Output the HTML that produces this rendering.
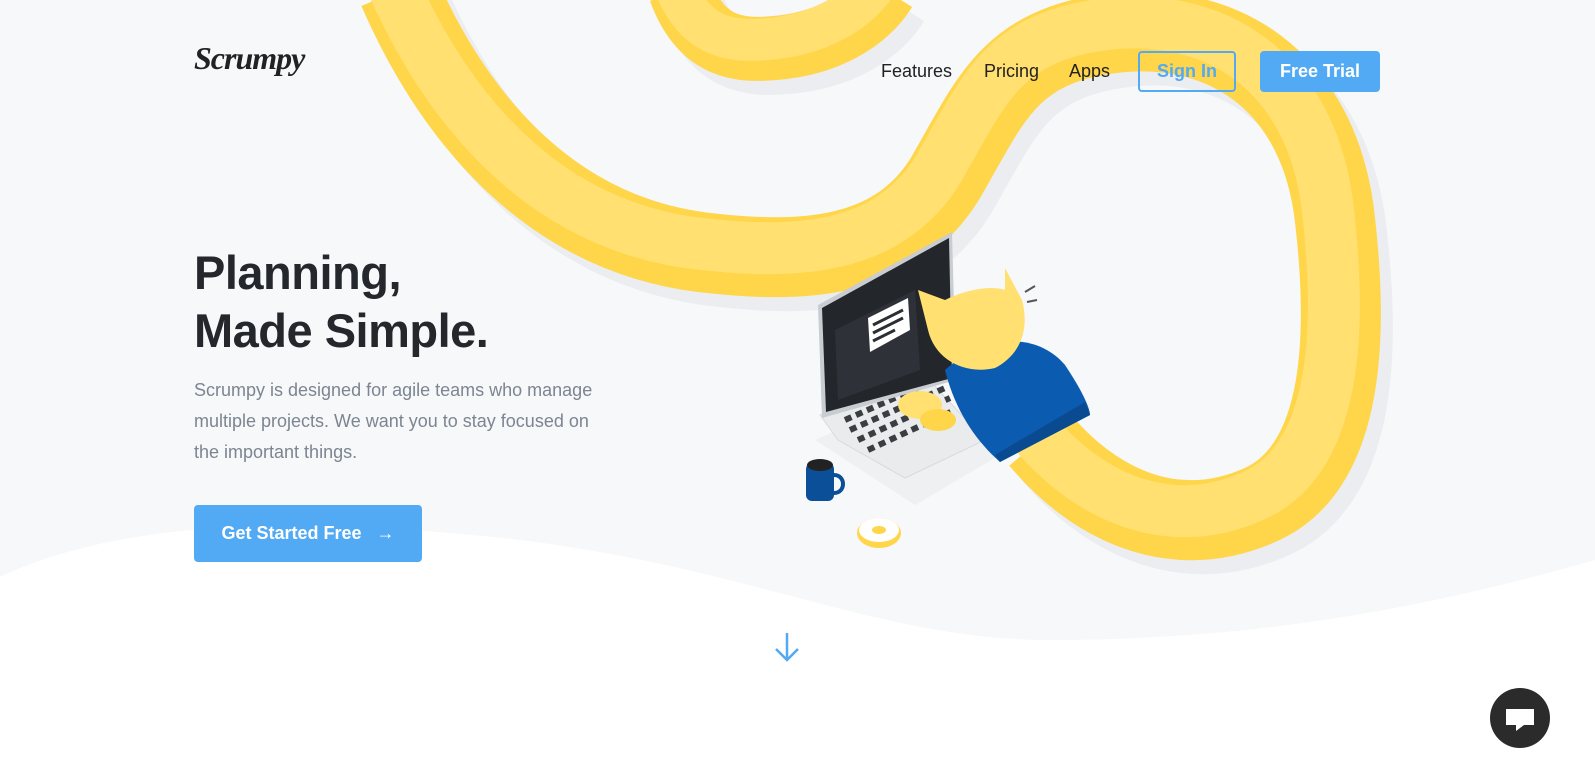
<!DOCTYPE html>
<html><head><meta charset="utf-8"><style>
*{margin:0;padding:0;box-sizing:border-box}
body{width:1595px;height:778px;overflow:hidden;background:#fff;font-family:"Liberation Sans",sans-serif;position:relative}
svg.bg{position:absolute;left:0;top:0}
.logo{position:absolute;left:194px;top:40px;font:italic bold 32px "Liberation Serif",serif;color:#222;letter-spacing:-1px}
.nav{position:absolute;top:51px;height:40px;display:flex;align-items:center;font-size:18px;color:#222}
.btn{position:absolute;border-radius:4px;font-weight:bold;display:flex;align-items:center;justify-content:center}
h1{position:absolute;left:194px;top:244px;font-size:47px;line-height:58px;color:#24272c;font-weight:bold;letter-spacing:-0.5px}
p{position:absolute;left:194px;top:375px;width:412px;font-size:18px;line-height:31px;color:#7c8591}
</style></head><body>
<svg class="bg" width="1595" height="778" viewBox="0 0 1595 778">
<rect width="1595" height="778" fill="#f7f8fa"/>
<g fill="none" stroke="#ebedf0" transform="translate(12,14)">
<path d="M398,-10 C455,120 550,232 700,252 C800,264 900,262 950,170 C990,100 1010,50 1100,35 C1220,15 1320,80 1335,220 C1350,350 1340,470 1260,505 C1170,545 1090,500 1040,440" stroke-width="80"/>
<path d="M680,-10 C700,45 735,52 775,48 C825,44 865,22 885,-10" stroke-width="64"/>
</g>
<g fill="none" stroke="#ffd54a">
<path d="M398,-10 C455,120 550,232 700,252 C800,264 900,262 950,170 C990,100 1010,50 1100,35 C1220,15 1320,80 1335,220 C1350,350 1340,470 1260,505 C1170,545 1090,500 1040,440" stroke-width="80"/>
<path d="M680,-10 C700,45 735,52 775,48 C825,44 865,22 885,-10" stroke-width="64"/>
</g>
<g fill="none" stroke="#ffe070" transform="translate(-7,-9)">
<path d="M398,-10 C455,120 550,232 700,252 C800,264 900,262 950,170 C990,100 1010,50 1100,35 C1220,15 1320,80 1335,220 C1350,350 1340,470 1260,505 C1170,545 1090,500 1040,440" stroke-width="52"/>
<path d="M680,-10 C700,45 735,52 775,48 C825,44 865,22 885,-10" stroke-width="42"/>
</g>
<path d="M0,577 C120,520 300,515 520,540 C760,570 880,640 1050,640 C1250,640 1420,610 1595,560 L1595,778 L0,778Z" fill="#fff"/>
<polygon points="815,440 905,400 1000,455 915,505" fill="#eef0f2"/>
<polygon points="820,415 920,370 985,440 905,478 838,440" fill="#e9ebed" stroke="#d8dadd"/>
<path d="M845,420 L940,378 M850,430 L945,388 M858,440 L950,398 M868,450 L955,410" stroke="#3a3d42" stroke-width="6" stroke-dasharray="7 5"/>
<polygon points="818,305 952,232 956,380 822,418" fill="#c9ccd0"/>
<polygon points="822,308 949,238 952,378 826,412" fill="#23272b"/>
<polygon points="835,330 915,290 920,370 838,400" fill="#2e3238"/>
<polygon points="868,318 908,298 910,330 870,352" fill="#fff"/>
<path d="M873,325 L903,310 M873,333 L903,318 M873,341 L895,330" stroke="#2b2e33" stroke-width="3"/>
<path d="M945,370 C990,330 1040,335 1065,365 C1085,395 1090,410 1090,415 L1000,462 C975,440 955,410 945,370Z" fill="#0b5cb0"/>
<path d="M1090,415 L1000,462 L995,455 L1085,402Z" fill="#094a90"/>
<path d="M918,290 L945,300 C965,290 990,285 1005,290 L1005,268 L1022,300 C1030,330 1020,355 995,368 C965,375 935,360 928,330Z" fill="#ffe070"/>
<path d="M1025,292 L1035,286 M1027,302 L1037,300" stroke="#555" stroke-width="2"/>
<ellipse cx="920" cy="405" rx="22" ry="14" fill="#ffe070"/>
<ellipse cx="938" cy="420" rx="18" ry="11" fill="#ffd54a"/>
<rect x="806" y="463" width="28" height="38" rx="6" fill="#0b4f98"/>
<ellipse cx="820" cy="465" rx="13" ry="6" fill="#222"/>
<path d="M834,475 C846,475 846,493 834,493" stroke="#0b4f98" stroke-width="4" fill="none"/>
<ellipse cx="879" cy="533" rx="22" ry="15" fill="#ffd54a"/>
<ellipse cx="879" cy="530" rx="20" ry="12" fill="#fff"/>
<ellipse cx="879" cy="530" rx="7" ry="4" fill="#ffd54a"/>
<path d="M787,633 L787,660 M776,649 L787,660 L798,649" stroke="#52aaf4" stroke-width="2.5" fill="none"/>
<circle cx="1520" cy="718" r="30" fill="#2b2b2b"/>
<path d="M1506,709 h28 v16 h-10 l-8,6 v-6 h-10z" fill="#fff"/>
</svg>
<div class="logo">Scrumpy</div>
<div class="nav" style="left:881px">Features</div>
<div class="nav" style="left:984px">Pricing</div>
<div class="nav" style="left:1069px">Apps</div>
<div class="btn" style="left:1138px;top:51px;width:98px;height:41px;border:2px solid #52aaf4;color:#52aaf4;font-size:18px">Sign In</div>
<div class="btn" style="left:1260px;top:51px;width:120px;height:41px;background:#52aaf4;color:#fff;font-size:18px">Free Trial</div>
<h1>Planning,<br>Made Simple.</h1>
<p>Scrumpy is designed for agile teams who manage multiple projects. We want you to stay focused on the important things.</p>
<div class="btn" style="left:194px;top:505px;width:228px;height:57px;background:#52aaf4;color:#fff;font-size:18px">Get Started Free&nbsp;&nbsp;&nbsp;→</div>
</body></html>
